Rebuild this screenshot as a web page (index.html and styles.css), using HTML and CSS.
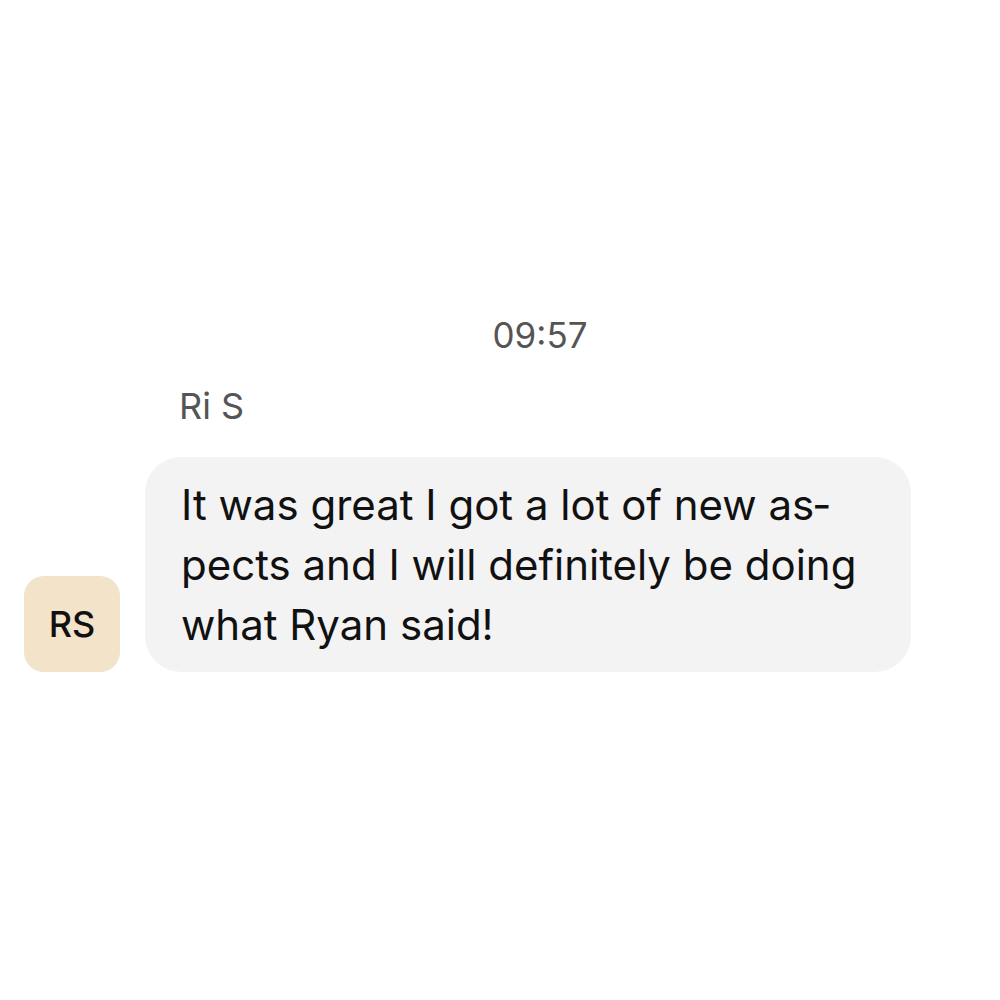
FILE: index.html
```html
<!DOCTYPE html>
<html lang="en">
<head>
  <meta charset="UTF-8">
  <meta name="viewport" content="width=device-width, initial-scale=1.0">
  <title>Chat</title>
  <link rel="stylesheet" href="styles.css">
</head>
<body>
  <div class="thread">
    <div class="time">09:57</div>
    <div class="group">
      <div class="sender">Ri S</div>
      <div class="row">
        <div class="avatar">RS</div>
        <div class="bubble">It was great I got a lot of new as&shy;pects and I will definitely be doing what Ryan said!</div>
      </div>
    </div>
  </div>
</body>
</html>
```

FILE: styles.css
```css
body {
  margin: 0;
  background: #ffffff;
  font-family: Inter, "Noto Sans", sans-serif;
  color: #111111;
}
.thread {
  padding: 313px 0 0 24px;
}
.time {
  text-align: center;
  padding-left: 56px; /* centre over the message column */
  font-size: 35px;
  line-height: 44px;
  color: #555555;
}
.group {
  margin-top: 27px;
}
.sender {
  padding-left: 155px;
  font-size: 36px;
  line-height: 44px;
  color: #555555;
}
.row {
  display: flex;
  align-items: flex-end;
  gap: 25px;
  margin-top: 29px;
}
.avatar {
  width: 96px;
  height: 96px;
  border-radius: 20px;
  background-color: #f2e3c9;
  display: flex;
  align-items: center;
  justify-content: center;
  font-size: 36px;
  font-weight: 500;
  flex-shrink: 0;
}
.bubble {
  width: 694px;
  padding: 18px 36px 17px 36px;
  border-radius: 36px;
  background-color: #f3f3f3;
  font-size: 42px;
  line-height: 60px;
}
```
